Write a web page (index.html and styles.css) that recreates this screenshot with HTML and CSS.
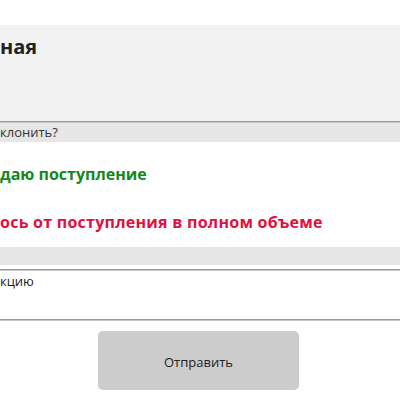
FILE: index.html
```html
<!DOCTYPE html>
<html lang="ru">
<head>
<meta charset="utf-8">
<link rel="stylesheet" href="styles.css">
</head>
<body>
<div class="page">
  <div class="top-gap"></div>
  <div class="panel">
    <div class="title">ная</div>
  </div>
  <div class="question">клонить?</div>
  <div class="options">
    <div class="option accept">даю поступление</div>
    <div class="option reject">ось от поступления в полном объеме</div>
  </div>
  <div class="bar"></div>
  <div class="comment">
    <div class="comment-text">кцию</div>
  </div>
  <div class="actions">
    <button class="submit">Отправить</button>
  </div>
</div>
</body>
</html>
```
FILE: styles.css
```css
html, body {
  margin: 0;
  padding: 0;
  background: #ffffff;
}
body {
  font-family: "Open Sans", "Noto Sans", "Liberation Sans", sans-serif;
  color: #222222;
  width: 400px;
  height: 400px;
  overflow: hidden;
}
.page {
  display: flex;
  flex-direction: column;
}
.top-gap {
  height: 25px;
}
.panel {
  background: #f2f2f2;
  height: 97px;
  box-sizing: border-box;
  padding-top: 8px;
  border-bottom: 1px solid #9a9a9a;
  box-shadow: 0 1px 0 #c8c8c8;
}
.title {
  font-size: 20px;
  font-weight: 700;
  line-height: 28px;
  color: #222222;
}
.question {
  margin-top: 1px;
  background: #e6e6e6;
  height: 19px;
  font-size: 13px;
  line-height: 19px;
  color: #333333;
}
.options {
  padding-top: 8px;
  padding-bottom: 1px;
  display: flex;
  flex-direction: column;
}
.option {
  height: 48px;
  line-height: 48px;
  font-size: 16px;
  font-weight: 700;
  white-space: nowrap;
}
.accept {
  color: #14891a;
}
.reject {
  color: #e0103f;
  letter-spacing: 0.25px;
}
.bar {
  background: #e6e6e6;
  height: 18px;
}
.comment {
  margin-top: 4px;
  height: 51px;
  border-top: 1px solid #9a9a9a;
  border-bottom: 1px solid #9a9a9a;
  box-shadow: inset 0 1px 0 #c8c8c8, 0 1px 0 #c8c8c8;
  box-sizing: border-box;
  padding-top: 2px;
}
.comment-text {
  font-size: 13px;
  line-height: 19px;
  color: #222222;
}
.actions {
  display: flex;
  justify-content: flex-start;
  padding-top: 11px;
  padding-left: 98px;
}
.submit {
  width: 201px;
  height: 59px;
  background: #cccccc;
  border: none;
  border-radius: 5px;
  font-family: "Open Sans", "Noto Sans", "Liberation Sans", sans-serif;
  font-size: 13px;
  color: #222222;
  padding: 0;
  padding-top: 2px;
}
```
